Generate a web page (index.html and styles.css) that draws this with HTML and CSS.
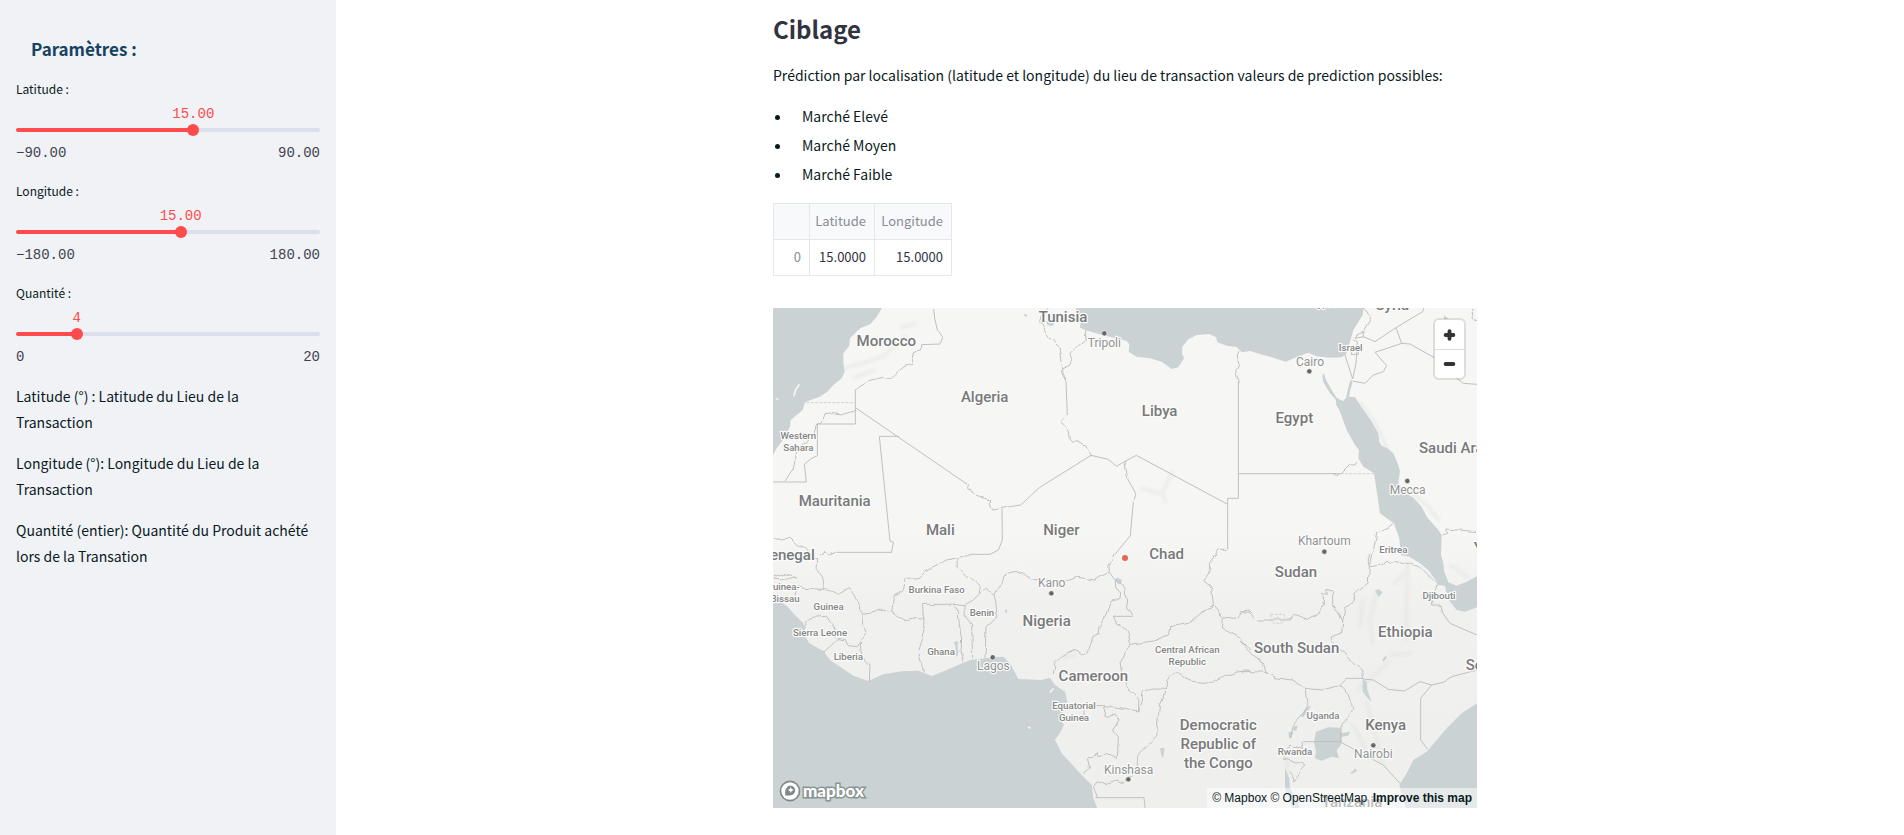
FILE: index.html
```html
<!DOCTYPE html>
<html lang="fr">
<head>
<meta charset="utf-8">
<meta name="viewport" content="width=device-width, initial-scale=1">
<title>Ciblage</title>
<link rel="stylesheet" href="styles.css">
</head>
<body>
<div class="app">
  <aside class="sidebar">
    <h2 class="sidebar-title">Paramètres :</h2>
    <div class="field">
      <label for="lat">Latitude :</label>
      <div class="slider" style="--p:58.33%">
        <output class="value" for="lat">15.00</output>
        <div class="track"></div>
        <input id="lat" type="range" min="-90" max="90" step="0.01" value="15">
      </div>
      <div class="limits"><span>−90.00</span><span>90.00</span></div>
    </div>
    <div class="field">
      <label for="lon">Longitude :</label>
      <div class="slider" style="--p:54.17%">
        <output class="value" for="lon">15.00</output>
        <div class="track"></div>
        <input id="lon" type="range" min="-180" max="180" step="0.01" value="15">
      </div>
      <div class="limits"><span>−180.00</span><span>180.00</span></div>
    </div>
    <div class="field">
      <label for="qty">Quantité :</label>
      <div class="slider" style="--p:20%">
        <output class="value" for="qty">4</output>
        <div class="track"></div>
        <input id="qty" type="range" min="0" max="20" value="4">
      </div>
      <div class="limits"><span>0</span><span>20</span></div>
    </div>
    <div class="notes">
      <p>Latitude (°) : Latitude du Lieu de la Transaction</p>
      <p>Longitude (°): Longitude du Lieu de la Transaction</p>
      <p>Quantité (entier): Quantité du Produit achété lors de la Transation</p>
    </div>
  </aside>

  <main class="main">
    <div class="content">
      <h1>Ciblage</h1>
      <p class="intro">Prédiction par localisation (latitude et longitude) du lieu de transaction valeurs de prediction possibles:</p>
      <ul class="markets">
        <li>Marché Elevé</li>
        <li>Marché Moyen</li>
        <li>Marché Faible</li>
      </ul>
      <table class="data">
        <thead><tr><th></th><th scope="col">Latitude</th><th scope="col">Longitude</th></tr></thead>
        <tbody><tr><th scope="row">0</th><td>15.0000</td><td>15.0000</td></tr></tbody>
      </table>

      <div class="map">
        <svg class="map-canvas" viewBox="0 0 2112 1500" preserveAspectRatio="xMidYMid slice" role="img" aria-label="Carte">
          <defs>
            <linearGradient id="land" x1="0" y1="0" x2="0" y2="1">
              <stop offset="0" stop-color="#f6f6f4"/><stop offset=".45" stop-color="#f6f6f4"/>
              <stop offset=".6" stop-color="#f0f0ef"/><stop offset="1" stop-color="#efefee"/>
            </linearGradient>
            <filter id="rough" x="-5%" y="-5%" width="110%" height="110%">
              <feTurbulence type="fractalNoise" baseFrequency="0.04" numOctaves="1" seed="4"/>
              <feDisplacementMap in="SourceGraphic" scale="16" xChannelSelector="R" yChannelSelector="G"/>
            </filter>
            <filter id="soft"><feGaussianBlur stdDeviation="5"/></filter>
          </defs>
          <rect width="2112" height="1500" fill="url(#land)"/>

          <!-- relief -->
          <g class="relief" filter="url(#soft)">
            <path d="M215 180L270 165L330 145L400 80M240 210L310 185M380 60L430 45"/>
            <path d="M1100 540L1170 560L1180 585M1170 550L1200 490" />
            <path d="M1770 870L1760 960M1810 850L1790 940L1800 1010M1860 830L1900 790M1905 760L1900 900L1900 1000M1850 1040L1910 1040M1750 1150L1850 1060M1860 1040L1920 1035"/>
            <path d="M1760 280L1810 350L1850 440M1900 540L1960 590L2000 640M2030 770L2090 810"/>
            <path d="M1780 1180L1800 1260L1830 1370M1740 1250L1780 1330M870 1050L910 1040M1540 1330L1545 1400"/>
          </g>

          <!-- seas -->
          <g class="water">
            <path transform="translate(-9 -9)" d="M0 0L336 9L318 38L300 58L270 70L240 100L238 122L220 145L220 175L224 200L215 220L190 240L172 260L150 275L122 285L105 292L98 315L62 345L60 365L46 395L20 430L9 450L0 450Z"/>
            <path transform="translate(711 -9)" d="M198 0L200 35L212 50L210 68L225 75L270 88L350 108L358 118L356 140L380 155L420 160L455 170L485 192L505 187L522 160L516 145L517 125L535 103L560 90L598 87L618 97L622 112L650 122L680 126L695 142L720 138L760 150L790 158L827 170L855 158L895 143L920 154L960 158L995 157L1008 148L1020 110L1030 75L1058 30L1062 0ZM108 48L135 56L125 64L112 60ZM42 27L53 30L50 35L43 33Z"/>
            <path transform="translate(1401 -9)" d="M252 205L258 225L275 255L290 278L300 284L310 288L318 278L328 235L334 222L337 235L329 262L328 276L345 276L360 300L392 345L415 385L418 410L425 423L440 428L460 445L475 480L480 500L475 530L490 560L520 578L545 605L560 635L595 675L605 690L603 750L610 775L613 800L625 832L650 842L680 830L715 812V905L675 920L650 915L622 880L615 842L598 840L565 795L540 775L508 755L483 750L478 700L462 655L440 640L420 625L412 570L402 505L370 485L355 460L357 435L345 420L320 375L300 320L288 298L288 285L270 265L250 232L247 212ZM612 30L625 42H612Z"/>
            <path transform="translate(-9 741)" d="M0 140L30 140L50 152L75 180L100 205L105 225L100 235L118 265L160 288L180 315L210 335L250 362L295 378L340 358L395 349L445 347L485 363L530 345L600 315L660 308L700 305L720 325L745 372L815 375L840 368L855 390L885 410L892 440L880 470L870 490L882 510L872 530L855 555L875 595L900 622L935 660L965 690L970 730L985 768L0 768ZM551 262L563 258L564 300L558 306L556 272ZM706 163L712 165L710 175L706 172Z"/>
            <path transform="translate(1401 741)" d="M715 442L665 475L620 520L560 590L520 615L500 655L478 690L500 768L715 768ZM228 530L265 517L300 518L305 535L330 530L325 542L305 545L303 570L290 585L297 610L275 605L245 617L225 610L228 590L222 560ZM368 372L380 380L382 405L395 440L385 432L368 410ZM214 452L190 487L182 482L198 458ZM135 640L148 670L150 700L175 740L180 768L160 768L135 700ZM405 107L415 102L428 112L416 126ZM428 312L440 300L438 312L428 320ZM330 655L348 640L350 648L338 656ZM160 515L174 512L168 528L160 526ZM145 532L160 530L155 548L147 548Z"/>
            <path transform="translate(711 741)" d="M322 68L336 74L334 84L326 88L312 74ZM450 580L464 578L460 606L456 608Z"/>
          </g>
          <path class="isle" d="M63 263L68 245L78 231M10 273H15M832 1152L840 1143M767 1258L771 1260"/>

          <!-- borders -->
          <g class="borders">
            <g transform="translate(-9 -9)">
              <path d="M256 253V357H142V452L122 462L103 478L109 531H9M256 308L592 538M328 394H388M328 394L360 708L370 712L365 742H200M696 610L697 705L685 735L660 748H598"/>
              <path class="faint" d="M109 293H256"/>
              <g filter="url(#rough)">
                <path d="M491 9L494 40L502 75L518 100L512 117L455 119L455 131L430 140L427 160L430 178L405 183L378 205L362 222L340 217L300 226L256 253M592 538L594 553L605 553L617 570L634 576L662 586L660 605L665 615L696 610L720 605M9 703L60 700L80 717L105 728L125 758M150 750L165 738L178 750L200 742"/>
                <path d="M256 320H245L218 328L190 323L165 326L155 357L140 360L130 390L112 415L100 415L80 440L70 490L45 528"/>
              </g>
            </g>
            <g transform="translate(711 -9)">
              <path d="M243 451L295 463L319 484L345 469L379 451L653 598M243 451L88 548L32 600L0 605M685 230V580H653V733M685 506H990M370 590L361 692L315 748"/>
              <path class="faint" d="M992 506H1092"/>
              <path filter="url(#rough)" d="M118 9L97 30L92 50L105 75L120 100L145 120L158 192L180 180L185 160L180 145L200 125L227 105V75M158 192L154 200L168 230L172 330L154 348L175 380L178 403L185 411L205 411L230 425L243 451M345 469L352 520L378 567L370 590M688 137L682 150L686 175L677 198L685 230M653 733H622L616 742L620 750"/>
            </g>
            <g transform="translate(1401 -9)">
              <path d="M315 150L338 222L348 175L352 110L340 105M338 228L375 235L400 210L430 200L440 182L405 142L485 115L468 68L548 20L551 9M468 68L405 110L370 95L345 100M485 115L510 117L583 158M650 220L670 235L711 238M333 148H355L356 132H337Z"/>
              <path filter="url(#rough)" d="M370 95L366 85L392 40L385 25L370 9M345 100L350 85L370 78M357 465L345 478L335 475L305 505L290 515L278 508M462 655L445 670L410 685L405 715L395 748L388 785M605 690L620 685L618 672L655 675L711 680M695 9L700 40L711 55"/>
            </g>
            <g transform="translate(-9 741)" filter="url(#rough)">
              <path d="M125 8L140 12L138 40L158 70L163 103L205 115L235 98L252 120L262 140L270 165L280 180L277 205L290 235L270 262L262 275L235 272L228 255L205 250L185 270L162 290M100 218L125 187L170 184L195 225V250M270 262L275 300L300 330L298 378M280 178L300 175L340 162L365 172L370 125L400 110L405 70L450 68L480 40L530 15L560 8L600 0M560 8L562 35L590 60L630 95L632 112L610 135L580 152L548 147L530 148H458L455 170L462 190L440 187L405 195L385 185L365 172M462 190L460 245L445 290L455 325L460 352M550 148L565 170L568 210L575 250L573 290L582 320M582 152V178L605 210L608 312M632 112L650 100L672 118L680 160L675 190L648 215L645 308M672 118L695 85L705 60L720 55M9 65L40 55L80 65L55 72L9 70M85 95L100 100L163 103M85 95L75 130L45 145"/>
            </g>
            <g transform="translate(711 741)">
              <path d="M368 184H310M285 452H222V490M257 728H402L406 768"/>
              <path filter="url(#rough)" d="M0 55L40 50L65 75L110 72L165 80L200 67L255 75L270 65L298 52L297 35L312 0M298 52L315 75L318 100L332 110L330 130L305 140L290 180L270 210L268 235L248 245L235 290L215 303L192 283L160 300L135 325L130 360M318 75L345 100L350 150L368 184M310 184L320 205L350 225L364 268L330 320L335 355L350 395L383 425V468L340 460L285 452L282 485L315 480L327 495L308 525L325 545L322 610L300 598L265 605L262 590L250 608H232L238 640L215 658M364 268L400 262L430 258L475 240L480 215L540 205L565 180L610 150L605 100L580 80L600 50L598 25L620 0M610 150L640 190L637 222L665 235L690 250L720 285M640 192L680 188L690 172L720 168M720 345L680 352L640 365L605 385L540 378L500 352L470 375L468 403L430 402L400 408L390 450L383 468M468 403L448 450L440 545L385 600V655L355 668L340 685L320 675L285 690L262 680L250 695L262 730"/>
            </g>
            <g transform="translate(1401 741)">
              <path d="M370 372L400 375L445 403L493 408L540 380L575 390L610 382L635 365L711 345M575 390L542 430V555L563 583M318 370H370M303 562L430 630L480 685M190 560H303M605 170L630 205L711 240"/>
              <path class="faint" d="M92 178H133V195L125 205H100L92 197Z"/>
              <path filter="url(#rough)" d="M0 170L28 172L50 195H150L165 178L205 193L235 175L250 150V125L240 115L262 118L260 107H278V150L300 180L308 200L305 235L275 245L272 262L310 290L345 330L368 345L370 372M308 200L315 160L340 140L345 115L385 80L388 35V0M388 35L425 30L437 15L450 25L480 20L540 35L595 90L575 130V150H600L605 170M0 258L40 300L70 325L78 352L105 368L155 375L195 400L245 405L295 393L318 370M0 350L40 350L78 352M195 400L200 440L205 455L165 500L150 550M300 390L325 420L338 460L325 490L303 510V562M190 560L185 580L150 570L130 610L155 615L195 630L160 680L150 650"/>
            </g>
          </g>

          <!-- labels -->
          <g class="names large">
            <text x="340" y="115">Morocco</text><text x="635" y="281">Algeria</text>
            <text x="185" y="595">Mauritania</text><text x="502" y="681">Mali</text>
            <text x="58" y="756">enegal</text>
            <text x="870" y="43">Tunisia</text><text x="1160" y="324">Libya</text>
            <text x="865" y="680">Niger</text><text x="1181" y="753">Chad</text>
            <text x="1858" y="6">Syria</text><text x="1564" y="345">Egypt</text>
            <text x="1938" y="434" class="start">Saudi Arabia</text>
            <text x="1569" y="807">Sudan</text><text x="1571" y="1034">South Sudan</text>
            <text x="1897" y="988">Ethiopia</text><text x="1838" y="1266">Kenya</text>
            <text x="2078" y="1085" class="start">Somalia</text><text x="2102" y="735" class="start">Yemen</text>
            <text x="821" y="955">Nigeria</text><text x="961" y="1119">Cameroon</text>
            <text x="1336" y="1267">Democratic</text><text x="1336" y="1324">Republic of</text><text x="1336" y="1380">the Congo</text>
            <text x="1737" y="1498">Tanzania</text>
          </g>
          <g class="names small">
            <text x="76" y="393">Western</text><text x="76" y="429">Sahara</text>
            <text x="40" y="846">uinea-</text><text x="36" y="881">Bissau</text>
            <text x="167" y="907">Guinea</text><text x="141" y="984">Sierra Leone</text><text x="226" y="1057">Liberia</text>
            <text x="491" y="855">Burkina Faso</text><text x="627" y="924">Benin</text><text x="504" y="1042">Ghana</text>
            <text x="1243" y="1035">Central African</text><text x="1243" y="1071">Republic</text>
            <text x="903" y="1204">Equatorial</text><text x="903" y="1240">Guinea</text>
            <text x="1733" y="130">Israel</text><text x="1861" y="736">Eritrea</text><text x="1998" y="873">Djibouti</text>
            <text x="1650" y="1234">Uganda</text><text x="1566" y="1342">Rwanda</text><text x="1660" y="-2">Cyprus</text>
          </g>
          <g class="names city">
            <text x="994" y="118">Tripoli</text><text x="1611" y="174">Cairo</text><text x="1904" y="558">Mecca</text>
            <text x="1654" y="711">Khartoum</text><text x="836" y="837">Kano</text><text x="661" y="1086">Lagos</text>
            <text x="1067" y="1398">Kinshasa</text><text x="1801" y="1351">Nairobi</text>
          </g>
          <g class="dots">
            <circle cx="994" cy="76" r="8"/><circle cx="1609" cy="190" r="8"/><circle cx="1903" cy="519" r="8"/>
            <circle cx="1654" cy="731" r="8"/><circle cx="835" cy="856" r="8"/><circle cx="659" cy="1048" r="8"/>
            <circle cx="1066" cy="1414" r="8"/><circle cx="1801" cy="1312" r="8"/>
          </g>
          <circle class="point" cx="1056" cy="750" r="9"/>
        </svg>

        <div class="zoom">
          <button type="button" aria-label="Zoom in"><svg viewBox="0 0 29 29"><path d="M14.5 10.5V18.5M10.5 14.5H18.5"/></svg></button>
          <button type="button" aria-label="Zoom out"><svg viewBox="0 0 29 29"><path d="M10.5 14.5H18.5"/></svg></button>
        </div>

        <a class="logo" href="#" aria-label="Mapbox">
          <svg viewBox="0 0 22 22"><circle class="halo" cx="11" cy="11" r="10.4"/><circle class="disc" cx="11" cy="11" r="8.7"/><path class="mark" d="M6.3 15.5C5.8 10.8 6.6 8.6 8.1 7.2C10 5.4 13.1 5.4 14.9 7.2C16.7 9 16.6 11.9 14.8 13.7C12.9 15.6 9.3 15.8 6.3 15.5Z"/><path class="disc" d="M11.8 6.9L12.7 9.1L14.9 10L12.7 10.9L11.8 13.1L10.9 10.9L8.7 10L10.9 9.1Z"/></svg>
          <span>mapbox</span>
        </a>

        <div class="credits">
          <a href="#">© Mapbox</a> <a href="#">© OpenStreetMap</a> <a class="improve" href="#">Improve this map</a>
        </div>
      </div>
    </div>
  </main>
</div>
</body>
</html>
```
FILE: styles.css
```css
* { box-sizing: border-box; }

body {
  margin: 0;
  background: #fff;
  color: #091a23;
  font: 14px/26px "Noto Sans CJK SC", "Open Sans", sans-serif;
}

.app { display: flex; height: 100vh; overflow: hidden; }

/* sidebar */
.sidebar {
  flex: 0 0 336px;
  padding: 34px 16px 0;
  background: #f0f2f6;
}
.sidebar-title {
  margin: 0 0 15px;
  padding-left: 15px;
  color: #154360;
  font-size: 17px;
  line-height: 30px;
  font-weight: 700;
}
.field { margin-bottom: 15px; }
.field + .field { margin-top: 17px; }
.field label {
  display: block;
  font-size: 12px;
  line-height: 20px;
}
.slider {
  position: relative;
  display: grid;
  align-items: center;
  height: 12px;
  margin-top: 25px;
}
.value {
  position: absolute;
  left: var(--p);
  bottom: 12px;
  transform: translateX(-50%);
  color: #ff4b4b;
  font: 14px/20px "Liberation Mono", monospace;
}
.track {
  grid-area: 1 / 1;
  height: 4px;
  border-radius: 4px;
  background: linear-gradient(to right, #ff4b4b var(--p), #dadfea var(--p));
}
.slider input {
  grid-area: 1 / 1;
  appearance: none;
  width: calc(100% + 12px);
  height: 12px;
  margin: 0 -6px;
  background: none;
  z-index: 1;
}
.slider input::-webkit-slider-thumb {
  appearance: none;
  width: 12px;
  height: 12px;
  border-radius: 50%;
  background: #ff4b4b;
}
.limits {
  display: flex;
  justify-content: space-between;
  margin-top: 6px;
  color: #3f4350;
  font: 14px/22px "Liberation Mono", monospace;
}
.notes { padding-right: 8px; }
.notes p { margin: 0 0 15px; }

/* main column */
.main { flex: 1; padding-left: 10px; }
.content { max-width: 736px; margin: 0 auto; padding: 0 16px; }
h1 {
  margin: 0;
  padding: 12px 0 16px;
  color: #31333f;
  font-size: 24px;
  line-height: 34px;
  font-weight: 700;
}
.intro { margin: 0 0 13px; }
.markets { margin: 0; padding: 0; list-style: none; }
.markets li { display: flex; align-items: center; height: 29px; }
.markets li::before {
  content: "";
  width: 5px;
  height: 5px;
  margin: 3px 22px 0 2px;
  border-radius: 50%;
  background: currentColor;
}
.data {
  width: 179px;
  margin: 15px 0 32px;
  border-collapse: collapse;
  border: 1px solid #e6e7ea;
  font-size: 13px;
  line-height: 20px;
}
.data th, .data td {
  height: 36px;
  padding: 0 8px 2px;
  border: 1px solid #e6e7ea;
  text-align: right;
  font-weight: 400;
  color: #31333f;
}
.data th { color: #8a8c95; }
.data thead th { padding-left: 4px; background: #f8f9fb; }
.data th:first-child { width: 36px; }
.data th:nth-child(2) { width: 65px; }

/* map */
.map { position: relative; height: 500px; overflow: hidden; background: #f6f6f4; }
.map-canvas { display: block; width: 100%; height: 100%; }
.water { fill: #cad2d3; }
.relief { fill: none; stroke: #dcdddd; stroke-width: 12; opacity: .35; }
.isle { fill: none; stroke: #f6f6f4; stroke-width: 5; stroke-linecap: round; }
.borders { fill: none; stroke: #bfc0c0; stroke-width: 3; stroke-linejoin: round; }
.faint { stroke: #d2d3d3; stroke-dasharray: 9 4; }
.names {
  font-family: Roboto, sans-serif;
  fill: #78797a;
  stroke: #fbfbfa;
  stroke-width: 7;
  stroke-linejoin: round;
  paint-order: stroke;
  text-anchor: middle;
}
.names .start { text-anchor: start; }
.large { font-size: 45px; font-weight: 500; }
.small { font-size: 29px; font-weight: 500; fill: #858686; }
.city { font-size: 36px; fill: #929393; }
.dots { fill: #666; stroke: #fff; stroke-width: 2; }
.point { fill: #de6a55; }

.zoom {
  position: absolute;
  top: 12px;
  right: 13px;
  width: 29px;
  border-radius: 4px;
  background: #fff;
  box-shadow: 0 0 0 2px rgba(0, 0, 0, .1);
}
.zoom button {
  display: block;
  width: 29px;
  height: 29px;
  padding: 0;
  border: 0;
  background: none;
}
.zoom button + button { border-top: 1px solid #ddd; }
.zoom svg { display: block; width: 29px; height: 28px; fill: none; stroke: #333; stroke-width: 4; stroke-linecap: round; }

.logo {
  position: absolute;
  left: 6px;
  bottom: 6px;
  display: flex;
  align-items: center;
  gap: 2px;
  color: #fff;
  font: 900 17px/22px Lato, sans-serif;
  text-decoration: none;
  -webkit-text-stroke: 3px #8b9494;
  paint-order: stroke fill;
}
.logo svg { width: 22px; height: 22px; }
.logo .halo, .logo .mark { fill: #808888; }
.logo .disc { fill: #fff; }

.credits {
  position: absolute;
  right: 0;
  bottom: 0;
  padding: 0 5px;
  background: rgba(255, 255, 255, .5);
  font: 12px/20px "Liberation Sans", Arial, sans-serif;
}
.credits a { color: #091a23; text-decoration: none; }
.credits .improve { margin-left: 2px; font-weight: 700; }
```
